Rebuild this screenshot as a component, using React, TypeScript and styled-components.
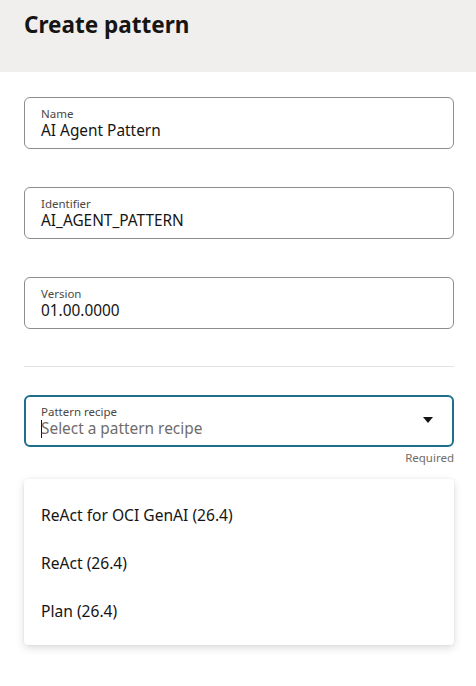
import React from 'react'
import styled, {createGlobalStyle} from 'styled-components'

const GlobalStyle = createGlobalStyle`
  html, body {
    margin: 0;
    padding: 0;
    background: #ffffff;
    font-family: "Noto Sans", "Open Sans", sans-serif;
    color: #161513;
  }
`

const Page = styled.div`
  width: 476px;
  min-height: 686px;
  background: #ffffff;
`

const Header = styled.header`
  height: 72px;
  box-sizing: border-box;
  padding: 9px 24px 0;
  background: #f1efed;

  h1 {
    margin: 0;
    font-size: 22.5px;
    line-height: 32px;
    font-weight: 700;
    color: #161513;
  }
`

const Form = styled.div`
  display: flex;
  flex-direction: column;
  padding: 25px 22px 0 24px;
`

const Field = styled.div<{focused?: boolean}>`
  position: relative;
  height: 52px;
  box-sizing: border-box;
  border: ${p => p.focused ? '2px solid #1e6f8c' : '1px solid #8f8c89'};
  border-radius: 6px;
  padding: ${p => p.focused ? '8px 15px 0 15px' : '9px 16px 0 16px'};
  display: flex;
  align-items: flex-start;
  margin-bottom: 38px;
`

const FieldText = styled.div`
  flex: 1;
  display: flex;
  flex-direction: column;
`

const Label = styled.span`
  font-size: 11.5px;
  line-height: 14px;
  color: #4a4744;
`

const Value = styled.span<{placeholder?: boolean}>`
  font-size: 15.4px;
  line-height: 20px;
  color: ${p => p.placeholder ? '#6f6c69' : '#161513'};
  display: flex;
  align-items: center;
`

const Caret = styled.span`
  width: 1px;
  height: 18px;
  background: #161513;
  margin-right: -1px;
`

const Arrow = styled.svg`
  margin-top: 12px;
  margin-right: 4px;
`

const Divider = styled.div`
  height: 1px;
  background: #e4e1de;
  margin: -1px 0 28px;
`

const SelectWrap = styled.div`
  display: flex;
  flex-direction: column;
`

const Required = styled.span`
  align-self: flex-end;
  font-size: 11.5px;
  line-height: 14px;
  color: #6f6c69;
  margin: 4px 0 14px;
`

const Menu = styled.div`
  background: #ffffff;
  border-radius: 4px;
  box-shadow: 0 3px 8px rgba(0, 0, 0, 0.14), 0 0 2px rgba(0, 0, 0, 0.08);
  padding: 12px 0 10px;
`

const Option = styled.div`
  height: 48px;
  display: flex;
  align-items: center;
  padding-left: 17px;
  font-size: 15.6px;
  color: #161513;
`

const fields = [
    {label: 'Name', value: 'AI Agent Pattern'},
    {label: 'Identifier', value: 'AI_AGENT_PATTERN'},
    {label: 'Version', value: '01.00.0000'},
]

const recipes = ['ReAct for OCI GenAI (26.4)', 'ReAct (26.4)', 'Plan (26.4)']

const App: React.FC = () => {
    return (
        <Page>
            <GlobalStyle/>
            <Header>
                <h1>Create pattern</h1>
            </Header>
            <Form>
                {fields.map(f => (
                    <Field key={f.label}>
                        <FieldText>
                            <Label>{f.label}</Label>
                            <Value>{f.value}</Value>
                        </FieldText>
                    </Field>
                ))}
                <Divider/>
                <SelectWrap>
                    <Field focused style={{marginBottom: 0}}>
                        <FieldText>
                            <Label>Pattern recipe</Label>
                            <Value placeholder>
                                <Caret/>
                                Select a pattern recipe
                            </Value>
                        </FieldText>
                        <Arrow width="10" height="6" viewBox="0 0 10 6">
                            <path d="M0 0 L10 0 L5 6 Z" fill="#161513"/>
                        </Arrow>
                    </Field>
                    <Required>Required</Required>
                </SelectWrap>
                <Menu>
                    {recipes.map(r => (
                        <Option key={r}>{r}</Option>
                    ))}
                </Menu>
            </Form>
        </Page>
    )
}

export default App
